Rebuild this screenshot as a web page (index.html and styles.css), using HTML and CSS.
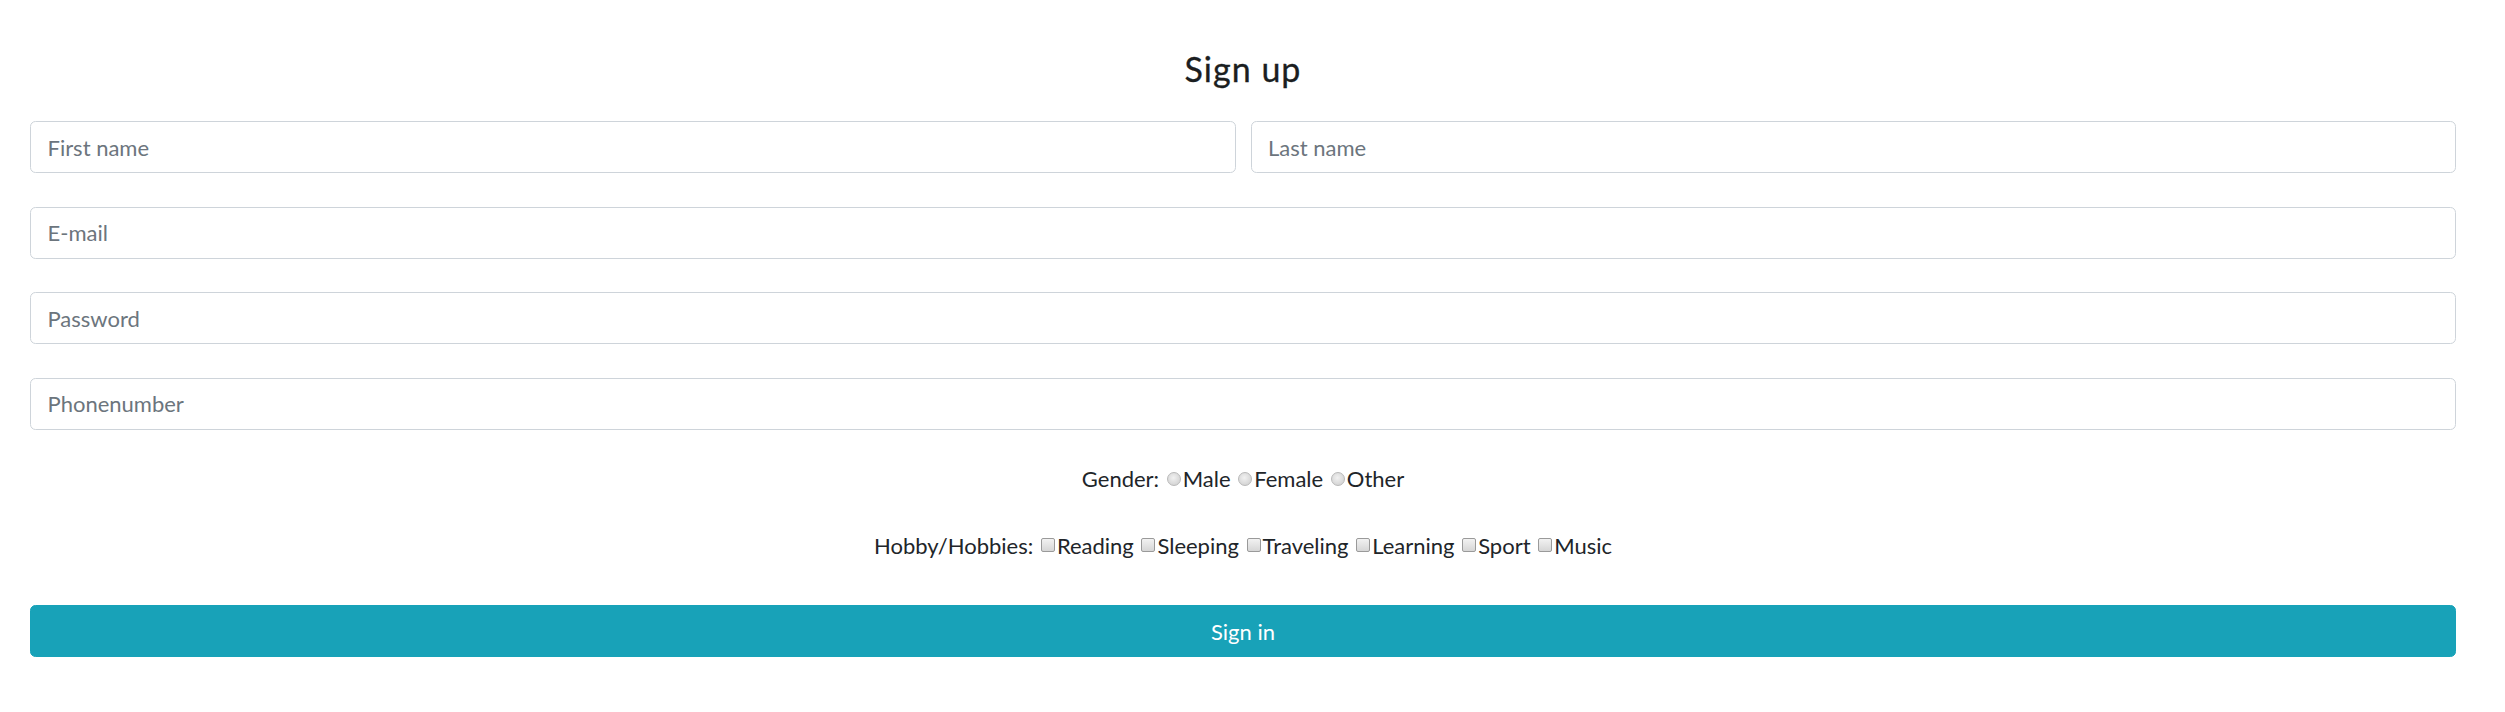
FILE: index.html
```html
<!DOCTYPE html>
<html lang="en">
<head>
<meta charset="utf-8">
<title>Sign up</title>
<link rel="stylesheet" href="styles.css">
</head>
<body>
<div class="page">
  <h4 class="title">Sign up</h4>
  <form class="form">
    <div class="row">
      <input class="control" type="text" placeholder="First name">
      <input class="control" type="text" placeholder="Last name">
    </div>
    <div class="row">
      <input class="control" type="email" placeholder="E-mail">
    </div>
    <div class="row">
      <input class="control" type="password" placeholder="Password">
    </div>
    <div class="row">
      <input class="control" type="tel" placeholder="Phonenumber">
    </div>
    <div class="choice gender">Gender: <input class="radio" type="radio" name="g">Male <input class="radio" type="radio" name="g">Female <input class="radio" type="radio" name="g">Other</div>
    <div class="choice hobby">Hobby/Hobbies: <input class="check" type="checkbox">Reading <input class="check" type="checkbox">Sleeping <input class="check" type="checkbox">Traveling <input class="check" type="checkbox">Learning <input class="check" type="checkbox">Sport <input class="check" type="checkbox">Music</div>
    <button class="submit" type="button">Sign in</button>
  </form>
</div>
</body>
</html>
```
FILE: styles.css
```css
* { box-sizing: border-box; }
html, body { margin: 0; background: #fff; }
body {
  font-family: "Lato", "Open Sans", sans-serif;
  font-size: 22px;
  color: #212529;
}
.page {
  padding: 49px 49px 0 30px;
}
.title {
  margin: 0 0 32px;
  font-size: 34px;
  font-weight: 400;
  letter-spacing: 1px;
  line-height: 40px;
  text-align: center;
  height: 40px;
  color: #1b1e21;
  -webkit-text-stroke: 0.3px #1b1e21;
}
.form { display: flex; flex-direction: column; }
.row {
  display: flex;
  gap: 15px;
  margin-bottom: 33.5px;
}
.control {
  flex: 1;
  min-width: 0;
  height: 52px;
  padding: 0 16.5px;
  border: 1px solid #ced4da;
  border-radius: 5.5px;
  font-family: inherit;
  font-size: 22px;
  color: #495057;
  background: #fff;
  outline: none;
}
.control::placeholder { color: #6c757d; opacity: 1; }
.choice {
  text-align: center;
  line-height: 33px;
  height: 33px;
}
.gender { margin-top: -1px; }
.hobby { margin-top: 33.5px; }
.radio {
  appearance: none;
  -webkit-appearance: none;
  width: 14px;
  height: 14px;
  margin: 0 2px 1px 2px;
  border: 1px solid #b9b9b9;
  border-radius: 50%;
  background: radial-gradient(circle at 45% 40%, #f1f1f1 0%, #dcdcdc 55%, #cbcbcb 100%);
  vertical-align: baseline;
}
.check {
  appearance: none;
  -webkit-appearance: none;
  width: 14px;
  height: 14px;
  margin: 0 2px 2px 2px;
  border: 1px solid #9a9a9a;
  border-radius: 2px;
  background: linear-gradient(#f2f2f2, #d6d6d6);
  vertical-align: baseline;
}
.submit {
  margin-top: 43.5px;
  height: 52px;
  border: 1px solid #17a2b8;
  border-radius: 5.5px;
  background: #18a2b8;
  color: #fff;
  font-family: inherit;
  font-size: 22px;
  line-height: 1.5;
  padding: 0;
}
```
